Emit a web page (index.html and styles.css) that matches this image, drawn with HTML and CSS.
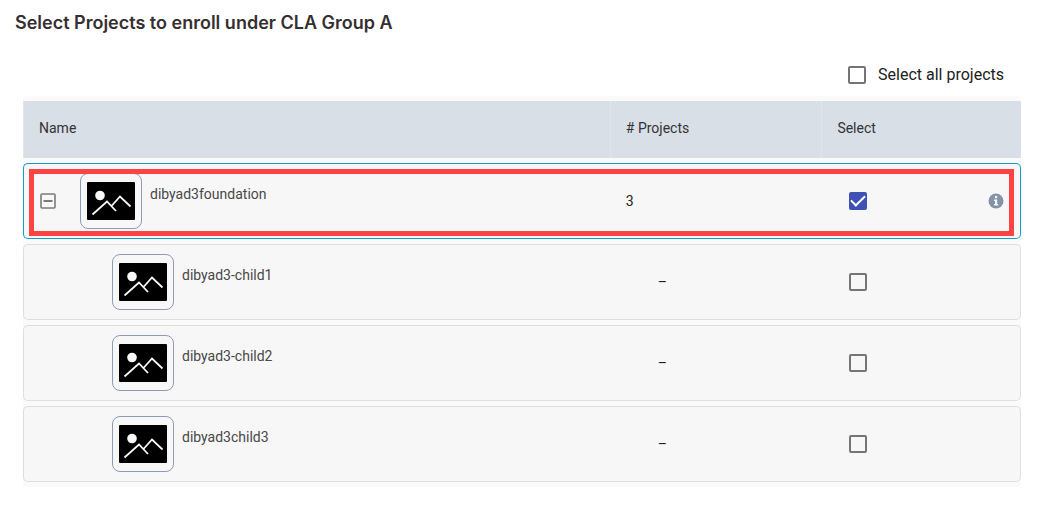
FILE: index.html
```html
<!DOCTYPE html>
<html lang="en">
<head>
<meta charset="utf-8">
<title>Select Projects</title>
<link rel="stylesheet" href="styles.css">
</head>
<body>
<svg class="defs" aria-hidden="true">
  <symbol id="picture" viewBox="0 0 48 38">
    <rect width="48" height="38" rx="1" fill="#000"/>
    <circle cx="13" cy="13.500" r="4.800" fill="#f7f7f7"/>
    <path d="M5.500 32.500 20 19.500l9 9.500M24.500 24 33 14.500 43.500 24.500" fill="none" stroke="#f7f7f7" stroke-width="1.800"/>
  </symbol>
</svg>
<main class="page">
  <h1 class="title">Select Projects to enroll under CLA Group A</h1>
  <div class="select-all">
    <input class="check" type="checkbox" id="all">
    <label for="all">Select all projects</label>
  </div>
  <div class="table-wrap">
    <table class="projects">
      <thead>
        <tr>
          <th class="col-name" scope="col">Name</th>
          <th class="col-count" scope="col"># Projects</th>
          <th class="col-select" scope="col">Select</th>
        </tr>
      </thead>
      <tbody>
        <tr class="parent">
          <td>
            <span class="highlight"></span>
            <div class="name">
              <button class="toggle" type="button" aria-label="Collapse" aria-expanded="true">
                <svg viewBox="0 0 16 16" width="16" height="16"><rect x="1" y="1" width="14" height="14" rx="1" fill="none" stroke="#7b7b7b" stroke-width="1.600"/><path d="M3.500 8h9" stroke="#7b7b7b" stroke-width="2"/></svg>
              </button>
              <span class="thumb"><svg width="48" height="38"><use href="#picture"/></svg></span>
              <label for="p0">dibyad3foundation</label>
            </div>
          </td>
          <td class="count">3</td>
          <td>
            <div class="select">
              <input class="check" type="checkbox" id="p0" checked>
              <button class="info" type="button" aria-label="Information">
                <svg viewBox="0 0 16 16" width="16" height="16"><circle cx="8" cy="8" r="7.500" fill="#8593a8"/><path d="M7 3h2.200v2.200H7zM6 6.500h3.200v4.500h1v1.500H6V11h1V8H6z" fill="#f7f7f7"/></svg>
              </button>
            </div>
          </td>
        </tr>
        <tr class="child">
          <td><div class="name"><span class="thumb"><svg width="48" height="38"><use href="#picture"/></svg></span><label for="p1">dibyad3-child1</label></div></td>
          <td class="none">–</td>
          <td><div class="select"><input class="check" type="checkbox" id="p1"></div></td>
        </tr>
        <tr class="child">
          <td><div class="name"><span class="thumb"><svg width="48" height="38"><use href="#picture"/></svg></span><label for="p2">dibyad3-child2</label></div></td>
          <td class="none">–</td>
          <td><div class="select"><input class="check" type="checkbox" id="p2"></div></td>
        </tr>
        <tr class="child">
          <td><div class="name"><span class="thumb"><svg width="48" height="38"><use href="#picture"/></svg></span><label for="p3">dibyad3child3</label></div></td>
          <td class="none">–</td>
          <td><div class="select"><input class="check" type="checkbox" id="p3"></div></td>
        </tr>
      </tbody>
    </table>
  </div>
</main>
</body>
</html>
```
FILE: styles.css
```css
* {
  box-sizing: border-box;
}

body {
  margin: 0;
  background: #fff;
  color: #212121;
  font-family: Roboto, "Liberation Sans", sans-serif;
  font-size: 14px;
}

.defs {
  display: none;
}

.page {
  padding: 12px 16px 20px 15px;
}

.title {
  margin: 0;
  color: #352f31;
  font-family: Inter, "Liberation Sans", sans-serif;
  font-size: 18px;
  font-weight: 600;
  line-height: 22px;
}

.select-all {
  display: flex;
  align-items: center;
  justify-content: flex-end;
  gap: 12px;
  margin-top: 28px;
  padding-right: 17px;
  font-size: 16px;
  line-height: 26px;
}

.check {
  appearance: none;
  flex: none;
  width: 18px;
  height: 18px;
  margin: 0;
  border: 2px solid #757575;
  border-radius: 2px;
}

.check:checked {
  border-color: #3f51b5;
  background: #3f51b5;
  display: grid;
  place-items: center;
}

.check:checked::after {
  content: "";
  width: 12px;
  height: 6px;
  border: solid #fff;
  border-width: 0 0 2px 2px;
  transform: translateY(-2px) rotate(-45deg);
}

.table-wrap {
  margin: 8px 0 0 8px;
  background: #fafafa;
  border-radius: 4px;
}

.projects {
  width: 100%;
  table-layout: fixed;
  border-collapse: separate;
  border-spacing: 0 5px;
}

.col-name {
  width: 58.8%;
}

.col-count {
  width: 21.2%;
}

.projects th {
  height: 57px;
  padding: 0 15px 3px;
  border-left: 1px solid #e1e6ec;
  background: #d9dfe7;
  color: #333;
  font-weight: 400;
  text-align: left;
}

.projects tbody tr {
  position: relative;
}

.projects td {
  height: 76px;
  padding: 0 16px;
  border: solid #dedede;
  border-width: 1px 0;
  background: #f7f7f7;
}

.projects td:first-child {
  border-left-width: 1px;
  border-radius: 5px 0 0 5px;
}

.projects td:last-child {
  border-right-width: 1px;
  border-radius: 0 5px 5px 0;
}

.projects .parent td {
  border-color: #129dcb;
}

.name {
  display: flex;
  align-items: center;
  color: #484848;
}

.name label {
  align-self: flex-start;
  margin-left: 8px;
  padding-top: 12px;
  line-height: 18px;
}

.child .name {
  padding-left: 72px;
}

.toggle,
.info {
  display: flex;
  padding: 0;
  border: 0;
  background: none;
}

.toggle {
  margin-right: 24px;
}

.thumb {
  display: flex;
  align-items: center;
  justify-content: center;
  width: 62px;
  height: 56px;
  border: 1px solid #8d9bb5;
  border-radius: 8px;
}

.projects .none {
  padding-left: 48px;
}

.select {
  display: flex;
  align-items: center;
  justify-content: space-between;
  padding-left: 12px;
}

.highlight {
  position: absolute;
  inset: 6px 7px 3px 6px;
  border: 5px solid #ff4242;
  pointer-events: none;
}
```
